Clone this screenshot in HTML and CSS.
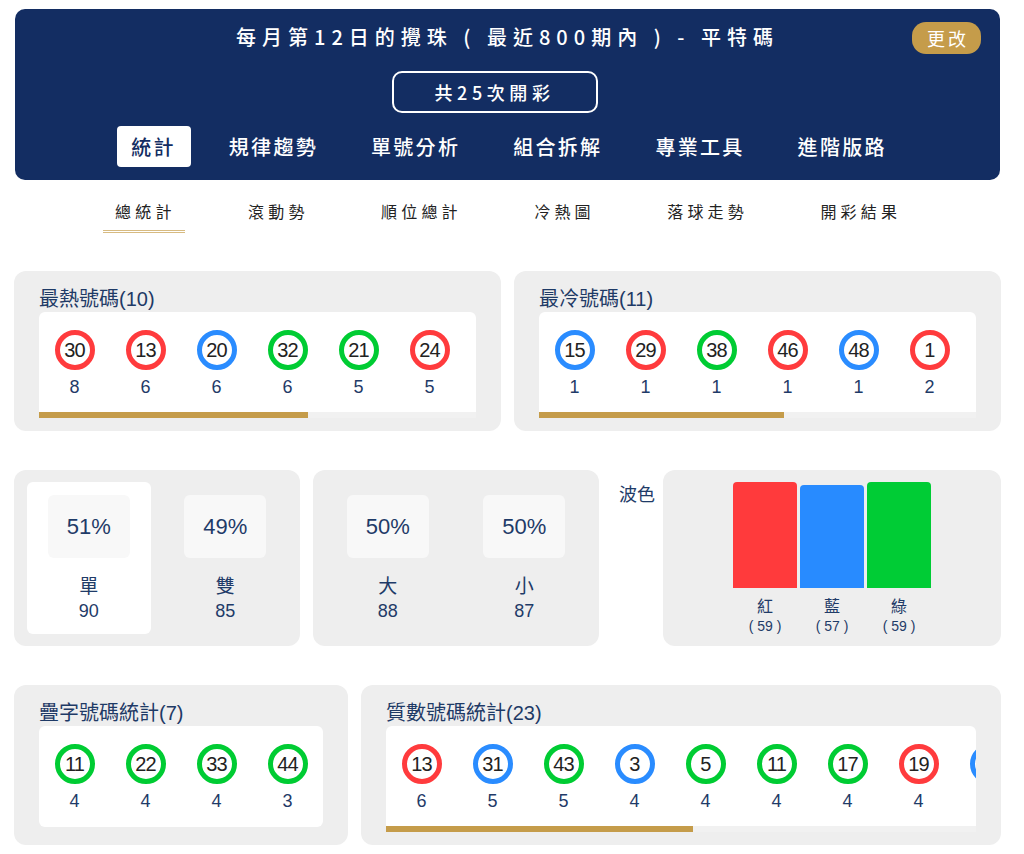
FILE: index.html
```html
<!DOCTYPE html>
<html lang="zh-Hant">
<head>
    <meta charset="UTF-8">
    <meta name="viewport" content="width=device-width, initial-scale=1.0">
    <title>平特碼統計</title>
    <link rel="stylesheet" href="styles.css">
</head>
<body>

<div class="page">
    <!-- Header -->
    <div class="header">
        <div class="title-row">
            <span></span>
            <h1 class="title">每月第12日的攪珠 ( 最近800期內 ) - 平特碼</h1>
            <button class="change-btn">更改</button>
        </div>
        <div class="count-row">
            <div class="count-box">共25次開彩</div>
        </div>
        <div class="main-nav">
            <a class="active">統計</a>
            <a>規律趨勢</a>
            <a>單號分析</a>
            <a>組合拆解</a>
            <a>專業工具</a>
            <a>進階版路</a>
        </div>
    </div>

    <!-- Sub tabs -->
    <div class="sub-nav">
        <a class="active">總統計</a>
        <a>滾動勢</a>
        <a>順位總計</a>
        <a>冷熱圖</a>
        <a>落球走勢</a>
        <a>開彩結果</a>
    </div>

    <!-- Hot / cold -->
    <div class="row">
        <div class="card half">
            <h4 class="card-title">最熱號碼(10)</h4>
            <div class="ball-box">
                <div class="ball-list">
                    <div class="ball-item"><span class="ball red">30</span><span class="cnt">8</span></div>
                    <div class="ball-item"><span class="ball red">13</span><span class="cnt">6</span></div>
                    <div class="ball-item"><span class="ball blue">20</span><span class="cnt">6</span></div>
                    <div class="ball-item"><span class="ball green">32</span><span class="cnt">6</span></div>
                    <div class="ball-item"><span class="ball green">21</span><span class="cnt">5</span></div>
                    <div class="ball-item"><span class="ball red">24</span><span class="cnt">5</span></div>
                </div>
                <div class="scroll-track"><div class="scroll-thumb" style="width: 61.5%"></div></div>
            </div>
        </div>
        <div class="card half">
            <h4 class="card-title">最冷號碼(11)</h4>
            <div class="ball-box">
                <div class="ball-list">
                    <div class="ball-item"><span class="ball blue">15</span><span class="cnt">1</span></div>
                    <div class="ball-item"><span class="ball red">29</span><span class="cnt">1</span></div>
                    <div class="ball-item"><span class="ball green">38</span><span class="cnt">1</span></div>
                    <div class="ball-item"><span class="ball red">46</span><span class="cnt">1</span></div>
                    <div class="ball-item"><span class="ball blue">48</span><span class="cnt">1</span></div>
                    <div class="ball-item"><span class="ball red">1</span><span class="cnt">2</span></div>
                </div>
                <div class="scroll-track"><div class="scroll-thumb" style="width: 56%"></div></div>
            </div>
        </div>
    </div>

    <!-- Odd/even, big/small, wave colour -->
    <div class="row">
        <div class="card stat-card">
            <div class="stat-col selected">
                <div class="pct">51%</div>
                <div class="stat-label">單</div>
                <div class="stat-num">90</div>
            </div>
            <div class="stat-col">
                <div class="pct">49%</div>
                <div class="stat-label">雙</div>
                <div class="stat-num">85</div>
            </div>
        </div>
        <div class="card stat-card">
            <div class="stat-col">
                <div class="pct">50%</div>
                <div class="stat-label">大</div>
                <div class="stat-num">88</div>
            </div>
            <div class="stat-col">
                <div class="pct">50%</div>
                <div class="stat-label">小</div>
                <div class="stat-num">87</div>
            </div>
        </div>
        <div class="wave-label">波色</div>
        <div class="card wave-card">
            <div class="wave-col">
                <div class="bar-area"><div class="bar red-bg" style="height: 106px"></div></div>
                <div class="wave-name">紅</div>
                <div class="wave-num">( 59 )</div>
            </div>
            <div class="wave-col">
                <div class="bar-area"><div class="bar blue-bg" style="height: 103px"></div></div>
                <div class="wave-name">藍</div>
                <div class="wave-num">( 57 )</div>
            </div>
            <div class="wave-col">
                <div class="bar-area"><div class="bar green-bg" style="height: 106px"></div></div>
                <div class="wave-name">綠</div>
                <div class="wave-num">( 59 )</div>
            </div>
        </div>
    </div>

    <!-- Repeated digits / primes -->
    <div class="row">
        <div class="card narrow">
            <h4 class="card-title">疊字號碼統計(7)</h4>
            <div class="ball-box no-scroll">
                <div class="ball-list">
                    <div class="ball-item"><span class="ball green">11</span><span class="cnt">4</span></div>
                    <div class="ball-item"><span class="ball green">22</span><span class="cnt">4</span></div>
                    <div class="ball-item"><span class="ball green">33</span><span class="cnt">4</span></div>
                    <div class="ball-item"><span class="ball green">44</span><span class="cnt">3</span></div>
                </div>
            </div>
        </div>
        <div class="card wide">
            <h4 class="card-title">質數號碼統計(23)</h4>
            <div class="ball-box">
                <div class="ball-list">
                    <div class="ball-item"><span class="ball red">13</span><span class="cnt">6</span></div>
                    <div class="ball-item"><span class="ball blue">31</span><span class="cnt">5</span></div>
                    <div class="ball-item"><span class="ball green">43</span><span class="cnt">5</span></div>
                    <div class="ball-item"><span class="ball blue">3</span><span class="cnt">4</span></div>
                    <div class="ball-item"><span class="ball green">5</span><span class="cnt">4</span></div>
                    <div class="ball-item"><span class="ball green">11</span><span class="cnt">4</span></div>
                    <div class="ball-item"><span class="ball green">17</span><span class="cnt">4</span></div>
                    <div class="ball-item"><span class="ball red">19</span><span class="cnt">4</span></div>
                    <div class="ball-item"><span class="ball blue">37</span><span class="cnt">4</span></div>
                    <div class="ball-item"><span class="ball blue">41</span><span class="cnt">3</span></div>
                    <div class="ball-item"><span class="ball red">29</span><span class="cnt">3</span></div>
                    <div class="ball-item"><span class="ball red">7</span><span class="cnt">2</span></div>
                </div>
                <div class="scroll-track"><div class="scroll-thumb" style="width: 52%"></div></div>
            </div>
        </div>
    </div>
</div>

</body>
</html>
```

FILE: styles.css
```css
/* Page */
body {
    margin: 0;
    background: #fff;
    font-family: "Liberation Sans", "Noto Sans CJK TC", sans-serif;
    color: #1f3b68;
}
.page {
    width: 987px;
    margin-left: 14px;
    padding-top: 9px;
}

/* Header */
.header {
    margin: 0 1px;
    padding: 13px 0 13px;
    background-color: #132d62;
    border-radius: 10px;
    color: #fff;
}
.title-row {
    display: grid;
    grid-template-columns: 1fr auto 1fr;
    align-items: center;
    height: 32px;
}
.title {
    margin: 0;
    font-family: "Noto Sans CJK TC", "Liberation Sans", sans-serif;
    font-size: 20px;
    font-weight: 500;
    letter-spacing: 6px;
    line-height: 28px;
    position: relative;
    top: -1px;
}
.change-btn {
    justify-self: end;
    margin-right: 19px;
    height: 32px;
    padding: 0 12px 0 15px;
    border: none;
    border-radius: 14px;
    background-color: #c59c4a;
    color: #fff;
    font-family: "Noto Sans CJK TC", sans-serif;
    font-size: 18px;
    letter-spacing: 3px;
    line-height: 32px;
}
.count-row {
    display: flex;
    justify-content: center;
    margin-top: 17px;
    padding-right: 26px;
}
.count-box {
    width: 202px;
    height: 38px;
    border: 2px solid #fff;
    border-radius: 10px;
    text-align: center;
    line-height: 38px;
    font-family: "Noto Sans CJK TC", sans-serif;
    font-size: 18px;
    font-weight: 500;
    letter-spacing: 4.6px;
}
.main-nav {
    display: flex;
    justify-content: center;
    gap: 24px;
    margin-top: 13px;
    padding-left: 4px;
}
.main-nav a {
    height: 41px;
    padding: 0 15px 0 14px;
    border-radius: 4px;
    font-family: "Noto Sans CJK TC", sans-serif;
    font-size: 20px;
    font-weight: 500;
    letter-spacing: 2.3px;
    line-height: 41px;
    color: #fff;
}
.main-nav a.active {
    background: #fff;
    color: #132d62;
}

/* Sub tabs */
.sub-nav {
    display: flex;
    gap: 51.4px;
    margin: 13px 0 38px 89px;
}
.sub-nav a {
    padding: 3px 9px 0 12px;
    height: 34px;
    font-family: "Noto Sans CJK TC", sans-serif;
    font-size: 16px;
    letter-spacing: 4.2px;
    line-height: 30px;
    color: #222;
}
.sub-nav a.active {
    border-bottom: 3px double #d7bb82;
}

/* Cards */
.row {
    display: flex;
    gap: 13px;
    margin-bottom: 39px;
}
.card {
    background-color: #eeeeee;
    border-radius: 12px;
    padding: 15px 25px 13px;
    box-sizing: border-box;
}
.half { width: 487px; }
.narrow { width: 334px; }
.wide { width: 640px; }
.card-title {
    margin: 0;
    font-size: 20px;
    font-weight: normal;
    line-height: 26px;
    color: #1e3a66;
}
.ball-box {
    background: #fff;
    border-radius: 6px 6px 0 0;
    overflow: hidden;
}
.ball-box.no-scroll {
    border-radius: 6px;
    padding-bottom: 1px;
}
.ball-list {
    display: flex;
    padding: 18px 0 14px;
}
.ball-item {
    flex: 0 0 71px;
    display: flex;
    flex-direction: column;
    align-items: center;
}
.ball {
    width: 30px;
    height: 30px;
    border: 5px solid;
    border-radius: 50%;
    text-align: center;
    line-height: 30px;
    font-size: 20px;
    letter-spacing: -0.8px;
    color: #222;
}
.ball.red { border-color: #ff3b3d; }
.ball.blue { border-color: #2a8cff; }
.ball.green { border-color: #00cc33; }
.cnt {
    margin-top: 6px;
    font-size: 18px;
    line-height: 22px;
}
.scroll-track {
    height: 6px;
    background: #f1f1f1;
}
.scroll-thumb {
    height: 6px;
    background: #c59c4a;
}

/* Odd / even */
.stat-card {
    width: 286px;
    height: 176px;
    padding: 12px 13px;
    display: flex;
}
.stat-col {
    width: 124px;
    height: 152px;
    padding-top: 13px;
    box-sizing: border-box;
    border-radius: 6px;
    display: flex;
    flex-direction: column;
    align-items: center;
}
.stat-col.selected { background: #fff; }
.stat-col + .stat-col { margin-left: 13px; }
.pct {
    width: 82px;
    height: 63px;
    background: #f8f8f8;
    border-radius: 6px;
    text-align: center;
    line-height: 63px;
    font-size: 22px;
}
.stat-label {
    margin-top: 16px;
    font-size: 19px;
    line-height: 25px;
}
.stat-num {
    font-size: 18px;
    line-height: 24px;
}

/* Wave colour */
.wave-label {
    width: 38px;
    padding: 12px 0 0 7px;
    box-sizing: border-box;
    font-size: 18px;
    line-height: 26px;
    white-space: nowrap;
}
.wave-card {
    width: 338px;
    height: 176px;
    padding: 12px 0 0 70px;
    display: flex;
    gap: 3px;
}
.wave-col {
    width: 64px;
    display: flex;
    flex-direction: column;
    align-items: center;
}
.bar-area {
    width: 100%;
    height: 106px;
    display: flex;
    align-items: flex-end;
}
.bar {
    width: 100%;
    border-radius: 4px 4px 0 0;
}
.red-bg { background: #ff3a3c; }
.blue-bg { background: #288bff; }
.green-bg { background: #00cc35; }
.wave-name {
    margin-top: 8px;
    font-size: 16px;
    line-height: 22px;
}
.wave-num {
    font-size: 14px;
    line-height: 16px;
}
```
